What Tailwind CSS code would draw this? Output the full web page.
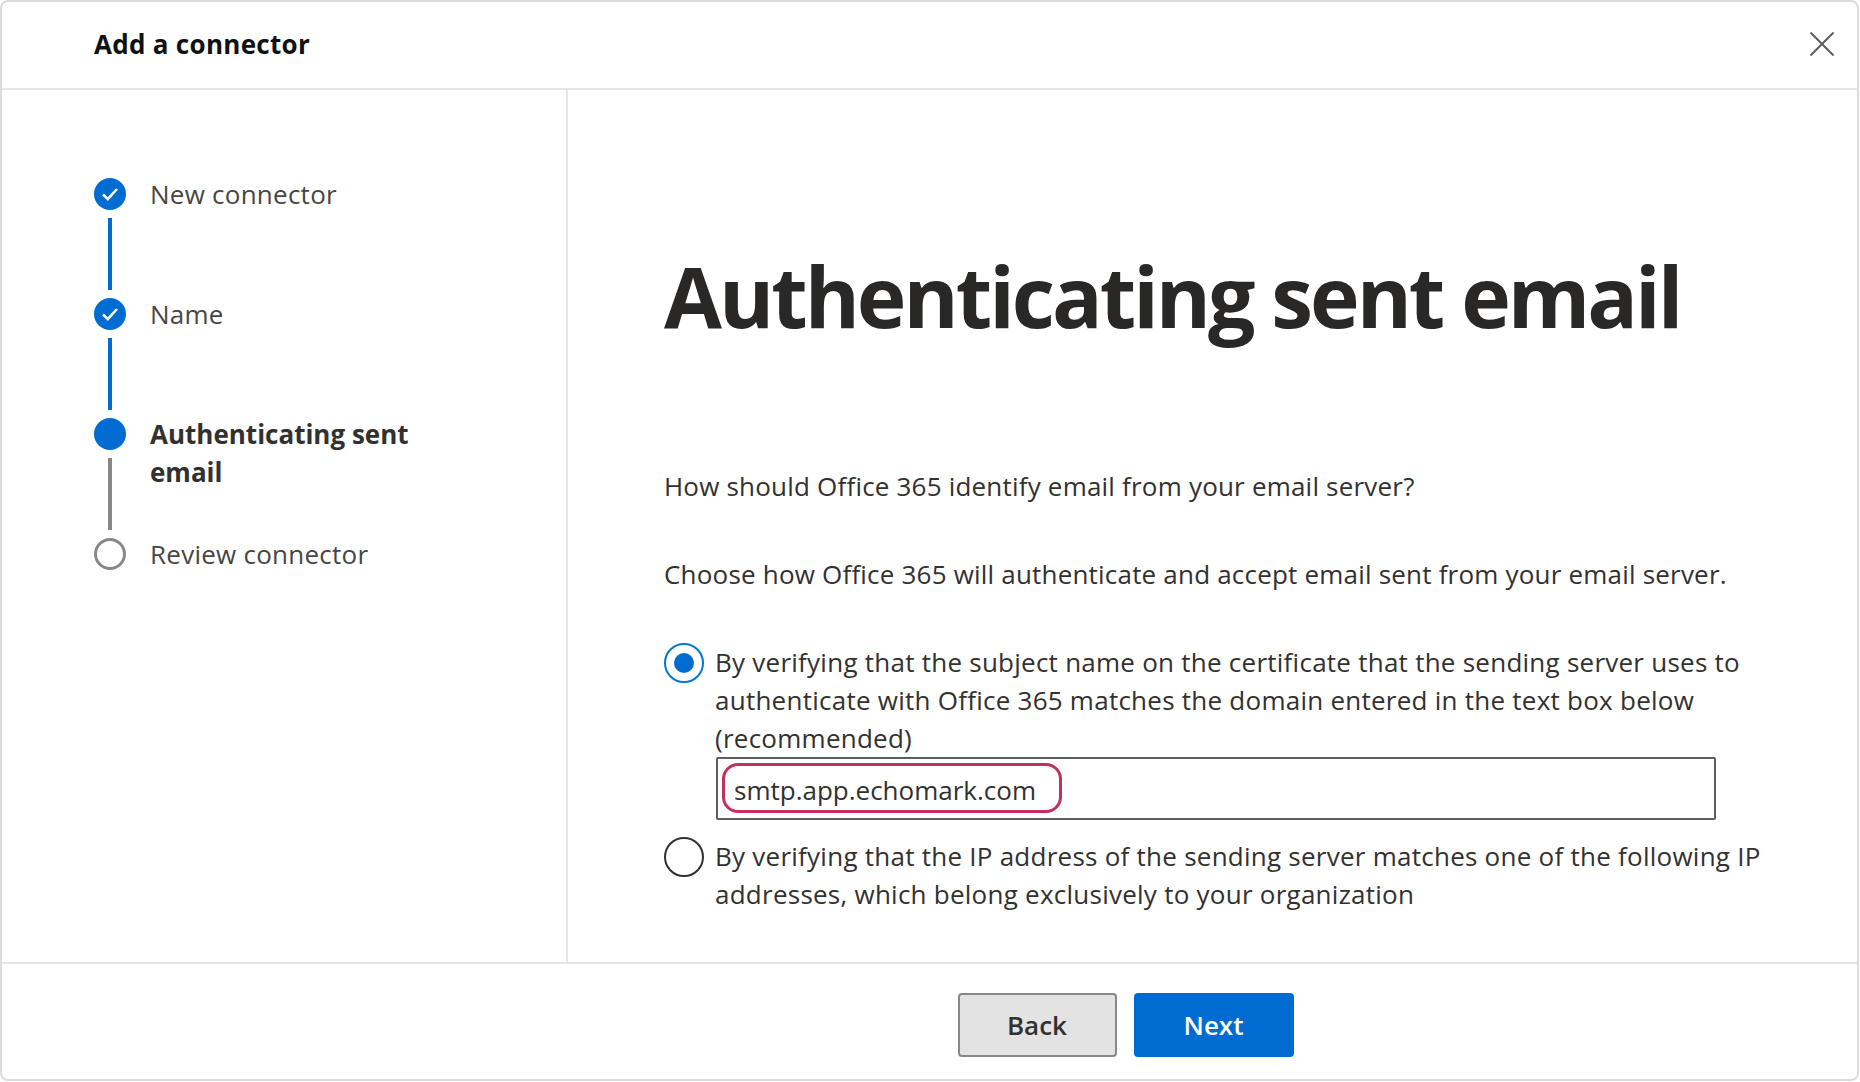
<!DOCTYPE html>
<html lang="en">
  <head>
    <meta charset="UTF-8" />
    <meta name="viewport" content="width=device-width, initial-scale=1.0" />
    <title>Add a connector</title>
    <script src="https://cdn.jsdelivr.net/npm/@tailwindcss/browser@4"></script>
  </head>
  <body class="bg-white">
    <div class="h-[1081px] w-[1859px] flex flex-col border-2 border-[#dcdcdc] rounded-lg font-['Open_Sans',sans-serif] text-[26px] leading-[38px] text-[#323130] overflow-hidden">
      <header class="h-[88px] shrink-0 flex items-center justify-between pl-[92px] pr-[23px] pb-[2px] border-b-2 border-[#e6e6e6]">
        <h1 class="text-[26px] font-bold text-[#111] tracking-[0.3px]">Add a connector</h1>
        <button aria-label="Close">
          <svg class="block w-6 h-6" viewBox="0 0 24 24" fill="none" stroke="#605e5c" stroke-width="2">
            <path d="M0.5 0.5 23.5 23.5M23.5 0.5 0.5 23.5" />
          </svg>
        </button>
      </header>

      <div class="flex-1 flex min-h-0">
        <!-- steps -->
        <nav class="w-[566px] shrink-0 border-r-2 border-[#e6e6e6] pl-[92px] pt-[88px]">
          <div class="flex gap-[24px]">
            <div class="flex flex-col items-center w-8">
              <span class="w-8 h-8 rounded-full bg-[#006cd1] flex items-center justify-center">
                <svg class="w-5 h-5" viewBox="0 0 20 20" fill="none" stroke="#fff" stroke-width="2.6">
                  <path d="M3 10.5 7.8 15.2 17 5" />
                </svg>
              </span>
              <span class="w-1 h-[72px] my-2 bg-[#006cd1]"></span>
            </div>
            <span class="text-[#484644] -mt-[3px] tracking-[0.25px]">New connector</span>
          </div>
          <div class="flex gap-[24px]">
            <div class="flex flex-col items-center w-8">
              <span class="w-8 h-8 rounded-full bg-[#006cd1] flex items-center justify-center">
                <svg class="w-5 h-5" viewBox="0 0 20 20" fill="none" stroke="#fff" stroke-width="2.6">
                  <path d="M3 10.5 7.8 15.2 17 5" />
                </svg>
              </span>
              <span class="w-1 h-[72px] my-2 bg-[#006cd1]"></span>
            </div>
            <span class="text-[#484644] -mt-[3px] tracking-[0.25px]">Name</span>
          </div>
          <div class="flex gap-[24px]">
            <div class="flex flex-col items-center w-8">
              <span class="w-8 h-8 rounded-full bg-[#006cd1]"></span>
              <span class="w-1 h-[72px] my-2 bg-[#8a8886]"></span>
            </div>
            <span class="w-[300px] h-fit font-bold text-[#323130] -mt-[3px]">Authenticating sent email</span>
          </div>
          <div class="flex gap-[24px]">
            <span class="w-8 h-8 rounded-full border-[3px] border-[#8a8886]"></span>
            <span class="text-[#484644] -mt-[3px] tracking-[0.25px]">Review connector</span>
          </div>
        </nav>

        <!-- form -->
        <main class="flex-1 pl-[96px] pt-[148px] tracking-[0.25px]">
          <h2 class="text-[84px] leading-[116px] font-[660] text-[#292827] tracking-[-3px]">Authenticating sent email</h2>
          <p class="mt-[113px] tracking-[0.2px]">How should Office 365 identify email from your email server?</p>
          <p class="mt-[50px] tracking-[0.2px]">Choose how Office 365 will authenticate and accept email sent from your email server.</p>

          <div class="mt-[50px] flex gap-[11px]">
            <span class="w-10 h-10 shrink-0 rounded-full border-2 border-[#0078d4] flex items-center justify-center">
              <span class="w-5 h-5 rounded-full bg-[#006cd1]"></span>
            </span>
            <div class="w-[1060px]">
              <label class="block">By verifying that the subject name on the certificate that the sending server uses to authenticate with Office 365 matches the domain entered in the text box below (recommended)</label>
              <div class="ml-px w-[1000px] h-[63px] border-2 border-[#605e5c] rounded-[2px] py-1 pl-1">
                <div class="h-[50px] w-[340px] border-[3px] border-[#c4305a] rounded-2xl pl-[9px] leading-[48px] tracking-normal text-[#323130]">smtp.app.echomark.com</div>
              </div>
            </div>
          </div>

          <div class="mt-[17px] flex gap-[11px]">
            <span class="w-10 h-10 shrink-0 rounded-full border-2 border-[#323130]"></span>
            <label class="w-[1060px]">By verifying that the IP address of the sending server matches one of the following IP addresses, which belong exclusively to your organization</label>
          </div>
        </main>
      </div>

      <footer class="h-[117px] shrink-0 border-t-2 border-[#e6e6e6] flex justify-center items-start pt-[29px] pl-[392px] gap-[17px]">
        <button class="w-[159px] h-16 rounded border-2 border-[#8a8886] bg-[#e3e3e3] font-semibold text-[#323130]">Back</button>
        <button class="w-[160px] h-16 rounded bg-[#006cd1] font-semibold text-white">Next</button>
      </footer>
    </div>
  </body>
</html>
